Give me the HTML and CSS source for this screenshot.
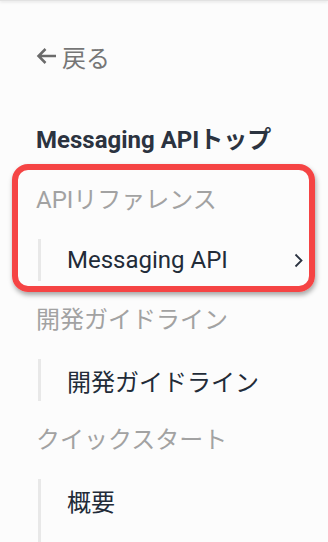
FILE: index.html
```html
<!DOCTYPE html>
<html lang="ja">
<head>
    <meta charset="UTF-8">
    <meta name="viewport" content="width=device-width, initial-scale=1.0">
    <title>Messaging API - メニュー</title>
    <link rel="stylesheet" href="styles.css">
</head>
<body>
    <div class="topbar"></div>
    <nav class="side-nav">
        <a class="back" href="#">
            <svg class="back-icon" width="21" height="18" viewBox="0 0 21 18">
                <path d="M20 9H2.5M9.5 2L2.5 9l7 7" fill="none" stroke="#6b6b6b" stroke-width="2.5"/>
            </svg>
            <span>戻る</span>
        </a>
        <a class="top-link" href="#">Messaging APIトップ</a>

        <div class="group">
            <div class="group-title">APIリファレンス</div>
            <ul class="sub-list">
                <li class="sub-item">
                    <span>Messaging API</span>
                    <svg class="chevron" width="9" height="15" viewBox="0 0 9 15">
                        <path d="M1.5 1.5l6 6-6 6" fill="none" stroke="#2a3240" stroke-width="1.8"/>
                    </svg>
                </li>
            </ul>
        </div>

        <div class="group">
            <div class="group-title">開発ガイドライン</div>
            <ul class="sub-list">
                <li class="sub-item"><span>開発ガイドライン</span></li>
            </ul>
        </div>

        <div class="group">
            <div class="group-title">クイックスタート</div>
            <ul class="sub-list sub-list-open">
                <li class="sub-item"><span>概要</span></li>
            </ul>
        </div>
    </nav>
    <div class="highlight"></div>
</body>
</html>
```

FILE: styles.css
```css
body {
    margin: 0;
    padding: 0;
    background-color: #fcfcfc;
    font-family: Roboto, "Noto Sans CJK JP", sans-serif;
    font-size: 24px;
    overflow: hidden;
}
.topbar {
    height: 1px;
    background-color: #e2e2e2;
    box-shadow: 0 1px 3px rgba(0,0,0,0.18);
}
.side-nav {
    padding: 35px 25px 0 36px;
}
.side-nav a {
    text-decoration: none;
}
.back {
    display: flex;
    align-items: center;
    gap: 5px;
    height: 40px;
    color: #767676;
}
.back-icon {
    flex-shrink: 0;
}
.top-link {
    display: block;
    margin-top: 34px;
    line-height: 60px;
    font-weight: bold;
    color: #2b3340;
}
.group-title {
    line-height: 60px;
    color: #a2a2a2;
}
.sub-list {
    list-style: none;
    margin: 9px 0 9px 2px;
    padding: 0;
    border-left: 3px solid #e8e8e8;
}
.sub-list-open {
    padding-bottom: 30px;
}
.sub-item {
    display: flex;
    align-items: center;
    justify-content: space-between;
    height: 42px;
    padding-left: 26px;
    color: #222b38;
}
.chevron {
    flex-shrink: 0;
}
/* red annotation frame over the reference section */
.highlight {
    position: absolute;
    top: 164px;
    left: 12px;
    width: 303px;
    height: 128px;
    box-sizing: border-box;
    border: 6px solid #f54444;
    border-radius: 16px;
    box-shadow: 1px 3px 5px rgba(0,0,0,0.35);
}
```
